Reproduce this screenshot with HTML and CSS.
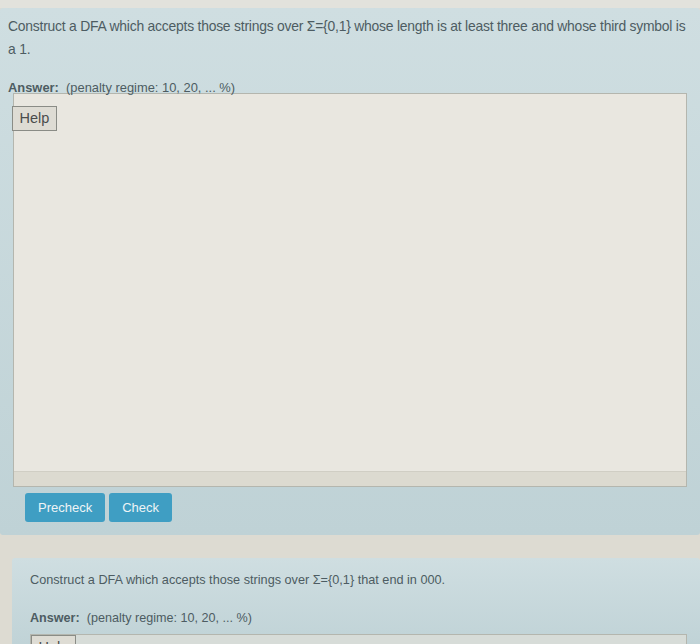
FILE: index.html
```html
<!DOCTYPE html>
<html>
<head>
<meta charset="utf-8">
<link rel="stylesheet" href="styles.css">
</head>
<body>
<div class="topband"></div>
<div class="que first">
  <p class="qtext">Construct a DFA which accepts those strings over Σ={0,1} whose length is at least three and whose third symbol is a 1.</p>
  <div class="answer"><b>Answer:</b>&nbsp; (penalty regime: 10, 20, ... %)</div>
  <div class="editor">
    <div class="helpbtn">Help</div>
    <div class="canvas"></div>
    <div class="hscroll"></div>
  </div>
  <div class="actions">
    <button class="btn">Precheck</button>
    <button class="btn">Check</button>
  </div>
</div>
<div class="que second">
  <p class="qtext">Construct a DFA which accepts those strings over Σ={0,1} that end in 000.</p>
  <div class="answer"><b>Answer:</b>&nbsp; (penalty regime: 10, 20, ... %)</div>
  <div class="editor short">
    <div class="helpbtn">Help</div>
  </div>
</div>
</body>
</html>
```
FILE: styles.css
```css
html, body {
  margin: 0;
  padding: 0;
}
body {
  width: 700px;
  height: 644px;
  overflow: hidden;
  background: #dddbd2;
  font-family: "Liberation Sans", Arial, sans-serif;
  color: #4d5c62;
}
.topband {
  height: 8px;
  background: #e2e2dc;
}
.que {
  background: linear-gradient(#cfdee1, #bfd2d6);
  border-radius: 3px;
}
.first {
  padding: 7px 13px 14px 8px;
  height: 506px;
}
.second {
  margin-top: 23px;
  margin-left: 12px;
  padding: 11px 14px 0 18px;
  height: 82px;
}
.qtext {
  margin: 0;
  font-size: 13.9px;
  letter-spacing: -0.22px;
  line-height: 23px;
}
.second .qtext {
  font-size: 12.7px;
  letter-spacing: 0;
}
.answer {
  font-size: 12.9px;
  line-height: 12px;
  margin-top: 21px;
}
.second .answer {
  font-size: 12.6px;
  margin-top: 20px;
}
.editor {
  margin-top: -1px;
  margin-left: 5px;
  width: 672px;
  height: 392px;
  background: #e9e7e0;
  border: 1px solid #b4b6ae;
  display: flex;
  flex-direction: column;
}
.helpbtn {
  margin-top: 12px;
  margin-left: -2px;
  width: 43px;
  height: 23px;
  border: 1px solid #8a8c86;
  background: #dedcd4;
  font-size: 14.5px;
  line-height: 23px;
  text-align: center;
  color: #4a4c4c;
}
.canvas {
  flex: 1;
}
.hscroll {
  height: 14px;
  background: #dcdad0;
  border-top: 1px solid #d0cec4;
}
.actions {
  margin-top: 6px;
  margin-left: 17px;
  display: flex;
  gap: 4px;
}
.btn {
  height: 29px;
  padding: 0 13px;
  border: none;
  border-radius: 3px;
  background: #3f9ec3;
  color: #eef4f6;
  font-family: "Liberation Sans", Arial, sans-serif;
  font-size: 13px;
}
.short {
  height: 60px;
  width: 655px;
  margin-top: 10px;
  margin-left: 0;
  background: #d7dcd8;
}
.short .helpbtn {
  margin-top: 0;
  margin-left: 0;
}
```
